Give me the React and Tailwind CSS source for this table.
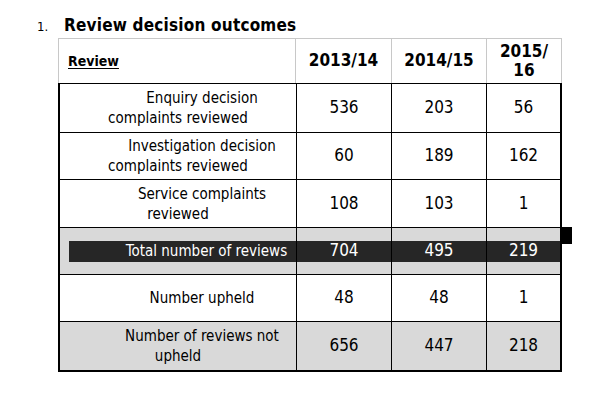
import React from "react";

const rows = [
  { label: ["Enquiry decision", "complaints reviewed"], values: ["536", "203", "56"], h: "h-[49px]" },
  { label: ["Investigation decision", "complaints reviewed"], values: ["60", "189", "162"], h: "h-[47px]" },
  { label: ["Service complaints", "reviewed"], values: ["108", "103", "1"], h: "h-[48px]" },
  { label: ["Total number of reviews"], values: ["704", "495", "219"], h: "h-[47px]", total: true },
  { label: ["Number upheld"], values: ["48", "48", "1"], h: "h-[47px]" },
  { label: ["Number of reviews not", "upheld"], values: ["656", "447", "218"], h: "h-[48px]", gray: true },
];

const App = () => {
  return (
    <div className="relative w-[616px] h-[401px] bg-white text-black font-['DejaVu_Sans_Condensed','DejaVu_Sans',sans-serif]">
      <div className="flex items-baseline pt-[13px] pl-[37px]">
        <span className="w-[27px] text-[13px]">1.</span>
        <span className="text-[17px] font-bold leading-[25px] tracking-[0.2px]">Review decision outcomes</span>
      </div>

      <div className="ml-[58px] w-[504px]">
        {/* header */}
        <div className="grid grid-cols-[237px_96px_95px_75px] h-[45px] border-t border-l border-[#c8c8c8] text-[17px] font-bold">
          <div className="flex items-center pl-[9px] border-r border-[#c8c8c8]">
            <span className="underline underline-offset-2 text-[14px]">Review</span>
          </div>
          <div className="flex items-center justify-center border-r border-[#c8c8c8]">2013/14</div>
          <div className="flex items-center justify-center border-r border-[#c8c8c8]">2014/15</div>
          <div className="flex items-center justify-center text-center leading-[19px] border-r border-[#c8c8c8]">
            2015/
            <br />
            16
          </div>
        </div>

        {/* body */}
        <div className="border-t border-l-2 border-r-2 border-b-2 border-black text-[15px]">
          {rows.map((r, i) => (
            <div
              key={i}
              className={`grid grid-cols-[237px_95px_95px_73px] ${r.h} ${i < rows.length - 1 ? "border-b border-black" : ""} ${r.total || r.gray ? "bg-[#d9d9d9]" : "bg-white"}`}
            >
              <div className="flex items-center border-r border-black">
                {r.total ? (
                  <div className="ml-[9px] flex-1 h-[21px] bg-[#262626] text-white flex items-center justify-center indent-12 whitespace-nowrap">
                    {r.label[0]}
                  </div>
                ) : (
                  <div className="flex-1 text-center leading-[20px] whitespace-nowrap">
                    {r.label.map((l, j) => (
                      <div key={j} className={j === 0 ? "indent-12" : "indent-0"}>
                        {l}
                      </div>
                    ))}
                  </div>
                )}
              </div>
              {r.values.map((v, j) => (
                <div
                  key={j}
                  className={`flex items-center text-[17px] ${j < 2 ? "border-r border-black" : ""}`}
                >
                  {r.total ? (
                    <div className="w-full h-[21px] bg-[#262626] text-white flex items-center justify-center">{v}</div>
                  ) : (
                    <div className="w-full text-center">{v}</div>
                  )}
                </div>
              ))}
            </div>
          ))}
        </div>
      </div>

      <div className="absolute left-[562px] top-[227px] w-[10px] h-[17px] bg-black" />
    </div>
  );
};

export default App;
